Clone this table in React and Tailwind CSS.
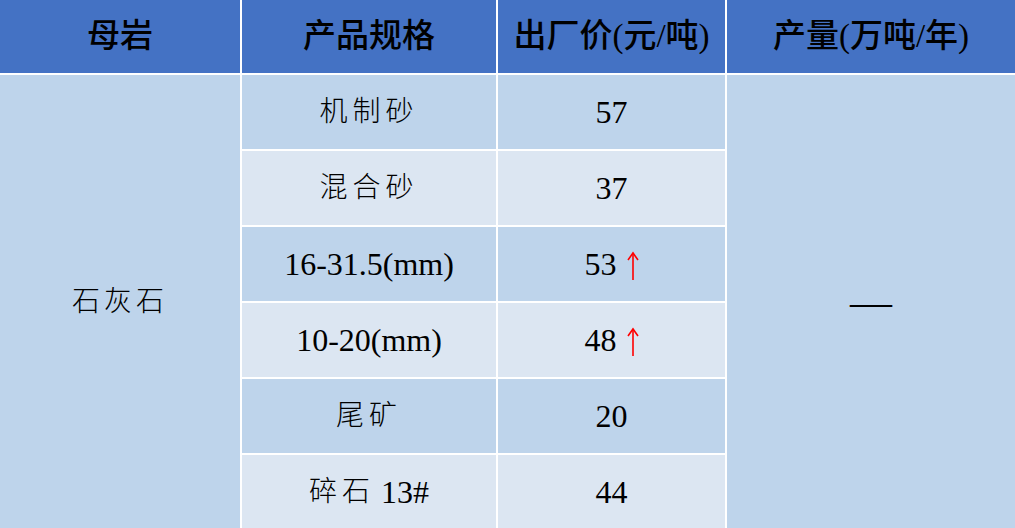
import React from 'react';

const rows = [
    { spec: '机制砂', price: '57' },
    { spec: '混合砂', price: '37' },
    { num: '16-31.5(mm)', price: '53', up: true },
    { num: '10-20(mm)', price: '48', up: true },
    { spec: '尾矿', price: '20' },
    { spec: '碎石', num: '13#', price: '44' },
];

const UpArrow = () => (
    <svg width="12" height="30" viewBox="0 0 12 30" className="ml-[10px] mt-[4px]">
        <path d="M6 2 L6 29" stroke="#ff0000" strokeWidth="1.6" />
        <path d="M1 9 L6 2 L11 9" stroke="#ff0000" strokeWidth="1.6" fill="none" />
    </svg>
);

const App = () => {
    const head = "flex items-center justify-center bg-[#4472c4] text-black text-[33px] font-medium";
    const serif = { fontFamily: '"Liberation Serif", "Noto Sans CJK SC", serif' };
    return (
        <div className="w-[1015px] h-[528px] overflow-hidden bg-white" style={serif}>
            <div className="grid grid-cols-[240px_254px_227px_1fr] grid-rows-[73px_repeat(6,74px)] gap-[2px] bg-white">
                <div className={head}>母岩</div>
                <div className={head}>产品规格</div>
                <div className={head}>出厂价(元/吨)</div>
                <div className={head}>产量(万吨/年)</div>

                <div className="row-span-6 col-start-1 row-start-2 flex items-center justify-center bg-[#bed4eb] text-[28px] font-light tracking-[4px] text-black">
                    石灰石
                </div>
                <div className="row-span-6 col-start-4 row-start-2 flex items-center justify-center bg-[#bed4eb] text-[42px] text-black">
                    —
                </div>

                {rows.map((r, i) => {
                    const bg = i % 2 === 0 ? 'bg-[#bed4eb]' : 'bg-[#dce6f2]';
                    return (
                        <React.Fragment key={i}>
                            <div
                                className={`col-start-2 flex items-center justify-center text-black ${bg}`}
                                style={{ gridRowStart: i + 2 }}
                            >
                                {r.spec && <span className="text-[28px] font-light tracking-[5px]">{r.spec}</span>}
                                {r.num && <span className={`text-[32px] ${r.spec ? 'ml-[6px]' : ''}`}>{r.num}</span>}
                            </div>
                            <div
                                className={`col-start-3 flex items-center justify-center text-[32px] text-black ${bg}`}
                                style={{ gridRowStart: i + 2 }}
                            >
                                <span>{r.price}</span>
                                {r.up && <UpArrow />}
                            </div>
                        </React.Fragment>
                    );
                })}
            </div>
        </div>
    );
};

export default App;
